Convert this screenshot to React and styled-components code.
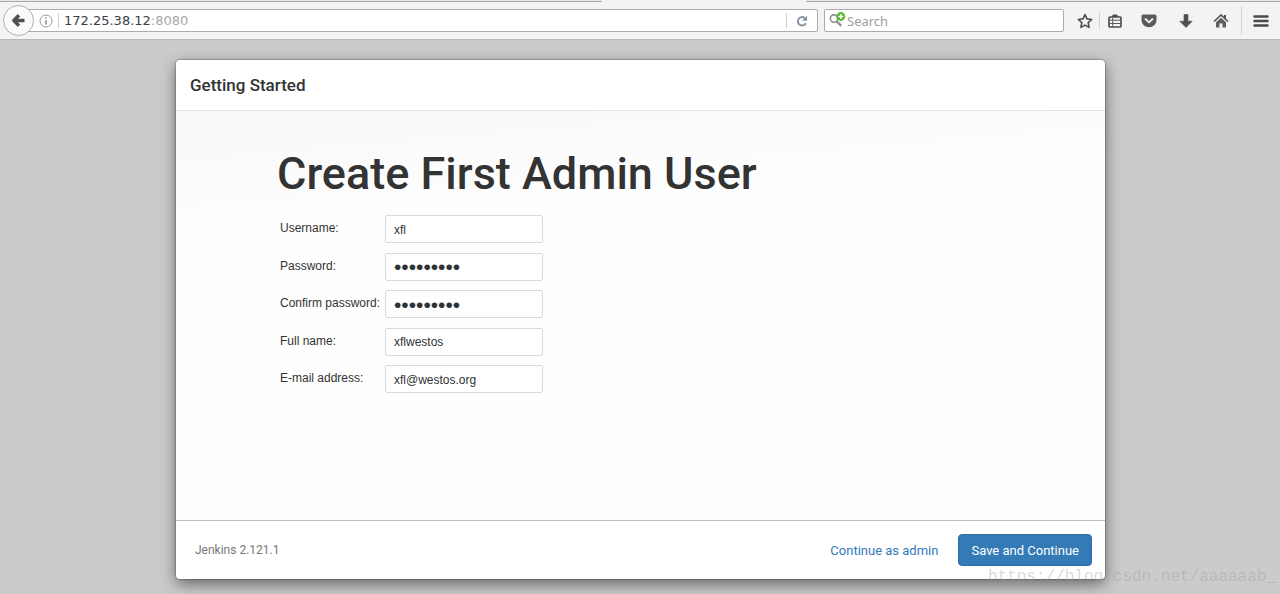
import React, { useState } from "react";
import styled, { createGlobalStyle } from "styled-components";

const GlobalStyle = createGlobalStyle`
  * {
    box-sizing: border-box;
  }

  body {
    margin: 0;
    background: #cbcbcb;
    font-family: Roboto, "Liberation Sans", sans-serif;
    color: #333333;
  }
`;

const Page = styled.div`
  position: relative;
  display: flex;
  flex-direction: column;
  min-height: 100vh;
  overflow: hidden;
`;

const TabStrip = styled.div`
  display: flex;
  justify-content: space-between;
  height: 2px;
  background: #f3f3f3;
`;

const TabEdge = styled.div`
  width: ${(props) => props.$width};
  border-bottom: 1px solid #a9a9a9;
  background: #e9e9e9;
`;

const Toolbar = styled.header`
  display: flex;
  align-items: center;
  height: 38px;
  padding-left: 3px;
  background: #f3f3f3;
  border-bottom: 1px solid #b8b8b8;
`;

const BackButton = styled.button`
  z-index: 1;
  display: flex;
  align-items: center;
  justify-content: center;
  width: 31px;
  height: 31px;
  padding: 0;
  border: 1px solid #b0b0b0;
  border-radius: 50%;
  background: #fafafa;
`;

const AddressBar = styled.div`
  display: flex;
  flex: 1;
  align-items: center;
  height: 23px;
  margin-left: -8px;
  padding-left: 12px;
  border: 1px solid #acacac;
  border-radius: 2px;
  background: #ffffff;
`;

const Divider = styled.span`
  width: 1px;
  height: 15px;
  background: #cfcfcf;
`;

const Address = styled.div`
  flex: 1;
  padding-left: 5px;
  font-family: "DejaVu Sans", sans-serif;
  font-size: 13px;
  line-height: 20px;
  color: #3c4145;
`;

const Port = styled.span`
  color: #a3a7a9;
`;

const BareButton = styled.button`
  display: flex;
  align-items: center;
  justify-content: center;
  width: ${(props) => props.$width}px;
  height: ${(props) => props.$height || 21}px;
  padding: 0;
  border: none;
  border-left: ${(props) => (props.$line ? "1px solid #d2d2d2" : "none")};
  background: transparent;
`;

const SiteInfo = styled.div`
  display: flex;
  padding-right: 5px;
`;

const SearchBox = styled.label`
  display: flex;
  align-items: center;
  width: 240px;
  height: 23px;
  margin: 0 7px 0 6px;
  padding-left: 4px;
  border: 1px solid #acacac;
  border-radius: 2px;
  background: #ffffff;
`;

const SearchInput = styled.input`
  flex: 1;
  min-width: 0;
  padding: 0 0 0 1px;
  border: none;
  outline: none;
  background: transparent;
  font-family: "Noto Sans", sans-serif;
  font-size: 13px;

  &::placeholder {
    color: #999d9f;
    opacity: 1;
  }
`;

const HomeSlot = styled.div`
  padding-right: 2px;
`;

const Backdrop = styled.main`
  display: flex;
  flex: 1;
  padding: 20px 175px 15px 176px;
`;

const Dialog = styled.section`
  display: flex;
  flex: 1;
  flex-direction: column;
  border-radius: 4px;
  background: #ffffff;
  box-shadow: 0 0 1px 1px rgba(0, 0, 0, 0.2), 0 5px 15px rgba(0, 0, 0, 0.5);
`;

const DialogHeader = styled.header`
  padding: 15px 14px 14px;
  border-bottom: 1px solid #e2e2e2;
`;

const DialogTitle = styled.h4`
  margin: 0;
  font-size: 17px;
  font-weight: 500;
  line-height: 21px;
`;

const DialogBody = styled.div`
  flex: 1;
  padding: 36px 102px 0 101px;
  background: linear-gradient(175deg, #f8f8f8 0, #fcfcfc 90px, #fefefe 130px);
`;

const Heading = styled.h1`
  margin: 0 0 14px;
  font-size: 45px;
  font-weight: 500;
  line-height: 54px;
`;

const Form = styled.form`
  display: grid;
  grid-template-columns: 105px 158px;
  grid-auto-rows: 1fr;
  height: 188px;
  padding-left: 3px;
`;

const Label = styled.label`
  padding-top: 5px;
  font-family: "Liberation Sans", Arial, sans-serif;
  font-size: 12px;
  line-height: 16px;
  white-space: nowrap;
`;

const Field = styled.input`
  width: 100%;
  height: 28px;
  padding: 1px 8px 0;
  border: 1px solid #d9d9d9;
  border-radius: 2px;
  outline: none;
  background: #ffffff;
  color: #2e3436;
  font-family: "Liberation Sans", Arial, sans-serif;
  font-size: 12px;

  &[type="password"] {
    font-size: 21px;
  }
`;

const DialogFooter = styled.footer`
  display: flex;
  align-items: center;
  height: 59px;
  padding: 0 13px 0 19px;
  border-top: 1px solid #bdbdbd;
`;

const Version = styled.div`
  flex: 1;
  font-size: 12px;
  color: #777777;
`;

const FooterButton = styled.button`
  height: 32px;
  margin-left: 7px;
  padding: 0 12px;
  border: 1px solid ${(props) => (props.$primary ? "#2e6da4" : "transparent")};
  border-radius: 4px;
  background: ${(props) => (props.$primary ? "#337ab7" : "transparent")};
  color: ${(props) => (props.$primary ? "#ffffff" : "#337ab7")};
  font-family: inherit;
  font-size: 13px;
`;

const Watermark = styled.div`
  position: absolute;
  right: 4px;
  bottom: 7px;
  color: rgba(160, 160, 145, 0.4);
  font-family: "Liberation Mono", monospace;
  font-size: 16px;
  line-height: 20px;
  pointer-events: none;
`;

const BackIcon = () => (
  <svg width="15" height="15" viewBox="0 0 15 15" fill="none">
    <path
      d="M8 2.2 2.8 7.5 8 12.8M3.5 7.5h10"
      stroke="#505050"
      strokeWidth="3.4"
      strokeLinejoin="round"
    />
  </svg>
);

const InfoIcon = () => (
  <svg width="14" height="14" viewBox="0 0 14 14" fill="none">
    <circle cx="7" cy="7" r="6" stroke="#999999" />
    <path d="M7 6v4.5M7 3.3v1.5" stroke="#8a8a8a" strokeWidth="1.5" />
  </svg>
);

const ReloadIcon = () => (
  <svg width="12" height="12" viewBox="0 0 12 12" fill="none">
    <path
      d="M9.8 8.2A4.2 4.2 0 1 1 8.6 2.9"
      stroke="#8492a2"
      strokeWidth="1.9"
    />
    <path d="M11 .7v5H6z" fill="#8492a2" />
  </svg>
);

const SearchIcon = () => (
  <svg width="17" height="17" viewBox="0 0 17 17" fill="none">
    <circle cx="5" cy="6.5" r="3.7" stroke="#929292" strokeWidth="1.7" />
    <path d="m7.8 9.3 4.5 4.5" stroke="#929292" strokeWidth="2.4" />
    <circle cx="11.8" cy="4.5" r="4.4" fill="#55b82e" />
    <path d="M11.8 2v5M9.3 4.5h5" stroke="#ffffff" strokeWidth="1.4" />
  </svg>
);

const StarIcon = () => (
  <svg width="16" height="16" viewBox="0 0 16 16" fill="none">
    <path
      d="m8 1.6 2 4.3 4.7.6-3.5 3.2.9 4.7L8 12.1l-4.1 2.3.9-4.7-3.5-3.2 4.7-.6z"
      stroke="#4d4d4d"
      strokeWidth="1.6"
      strokeLinejoin="round"
    />
  </svg>
);

const ListIcon = () => (
  <svg width="14" height="14" viewBox="0 0 14 14" fill="none">
    <rect x="1" y="3" width="12" height="10" rx="1" stroke="#4d4d4d" strokeWidth="1.7" />
    <path d="M4 3V1.8L5.5.5h3L10 1.8V3z" fill="#4d4d4d" />
    <path d="M2 6.2h10M2 9.5h10M4.7 4v8.5" stroke="#5b5b5b" strokeWidth="1" />
  </svg>
);

const PocketIcon = () => (
  <svg width="16" height="14" viewBox="0 0 16 14" fill="none">
    <path
      d="M2 .5h12A1.5 1.5 0 0 1 15.5 2v4.3a7.5 7 0 0 1-15 0V2A1.5 1.5 0 0 1 2 .5z"
      fill="#5a5a5a"
    />
    <path
      d="m4.5 5 3.5 3.3L11.5 5"
      stroke="#f3f3f3"
      strokeWidth="1.8"
      strokeLinecap="round"
      strokeLinejoin="round"
    />
  </svg>
);

const DownloadIcon = () => (
  <svg width="14" height="14" viewBox="0 0 14 14">
    <path
      d="M5 .5h4v6.7h4.2L7 13.5.8 7.2H5z"
      fill="#505050"
      stroke="#505050"
      strokeWidth=".6"
      strokeLinejoin="round"
    />
  </svg>
);

const HomeIcon = () => (
  <svg width="16" height="14" viewBox="0 0 16 14" fill="none">
    <path d="M1 7.5 8 1l7 6.5" stroke="#505050" strokeWidth="1.6" />
    <path d="M3 8.2 8 3.7l5 4.5v5.3H9.5v-4h-3v4H3z" fill="#606060" />
    <path d="M11 1h2v4l-2-1.8z" fill="#505050" />
  </svg>
);

const MenuIcon = () => (
  <svg width="16" height="14" viewBox="0 0 16 14">
    <path
      d="M1.5 2.5h13M1.5 7h13M1.5 11.5h13"
      stroke="#4a4a4a"
      strokeWidth="2.5"
      strokeLinecap="round"
    />
  </svg>
);

const fields = [
  { name: "username", label: "Username:", type: "text" },
  { name: "password1", label: "Password:", type: "password" },
  { name: "password2", label: "Confirm password:", type: "password" },
  { name: "fullname", label: "Full name:", type: "text" },
  { name: "email", label: "E-mail address:", type: "text" },
];

const BrowserBar = () => (
  <>
    <TabStrip>
      <TabEdge $width="47%" />
      <TabEdge $width="37%" />
    </TabStrip>
    <Toolbar>
      <BackButton aria-label="Back">
        <BackIcon />
      </BackButton>
      <AddressBar>
        <SiteInfo>
          <InfoIcon />
        </SiteInfo>
        <Divider />
        <Address>
          172.25.38.12<Port>:8080</Port>
        </Address>
        <Divider />
        <BareButton $width={30} aria-label="Reload">
          <ReloadIcon />
        </BareButton>
      </AddressBar>
      <SearchBox>
        <SearchIcon />
        <SearchInput type="text" placeholder="Search" aria-label="Search" />
      </SearchBox>
      <BareButton $width={28} aria-label="Bookmark">
        <StarIcon />
      </BareButton>
      <BareButton $width={30} $height={17} $line aria-label="Bookmarks list">
        <ListIcon />
      </BareButton>
      <BareButton $width={39} aria-label="Pocket">
        <PocketIcon />
      </BareButton>
      <BareButton $width={35} aria-label="Downloads">
        <DownloadIcon />
      </BareButton>
      <HomeSlot>
        <BareButton $width={36} aria-label="Home">
          <HomeIcon />
        </BareButton>
      </HomeSlot>
      <BareButton $width={39} $height={29} $line aria-label="Menu">
        <MenuIcon />
      </BareButton>
    </Toolbar>
  </>
);

const App = () => {
  const [values, setValues] = useState({
    username: "xfl",
    password1: "xflwestos",
    password2: "xflwestos",
    fullname: "xflwestos",
    email: "xfl@westos.org",
  });

  const handleChange = (e) => {
    setValues({ ...values, [e.target.name]: e.target.value });
  };

  const handleSubmit = (e) => {
    e.preventDefault();
  };

  return (
    <Page>
      <GlobalStyle />
      <BrowserBar />
      <Backdrop>
        <Dialog>
          <DialogHeader>
            <DialogTitle>Getting Started</DialogTitle>
          </DialogHeader>
          <DialogBody>
            <Heading>Create First Admin User</Heading>
            <Form id="admin-form" onSubmit={handleSubmit}>
              {fields.map((field) => (
                <React.Fragment key={field.name}>
                  <Label htmlFor={field.name}>{field.label}</Label>
                  <Field
                    id={field.name}
                    name={field.name}
                    type={field.type}
                    value={values[field.name]}
                    onChange={handleChange}
                  />
                </React.Fragment>
              ))}
            </Form>
          </DialogBody>
          <DialogFooter>
            <Version>Jenkins 2.121.1</Version>
            <FooterButton type="button">Continue as admin</FooterButton>
            <FooterButton type="submit" form="admin-form" $primary>
              Save and Continue
            </FooterButton>
          </DialogFooter>
        </Dialog>
      </Backdrop>
      <Watermark>https://blog.csdn.net/aaaaaab_</Watermark>
    </Page>
  );
};

export default App;
